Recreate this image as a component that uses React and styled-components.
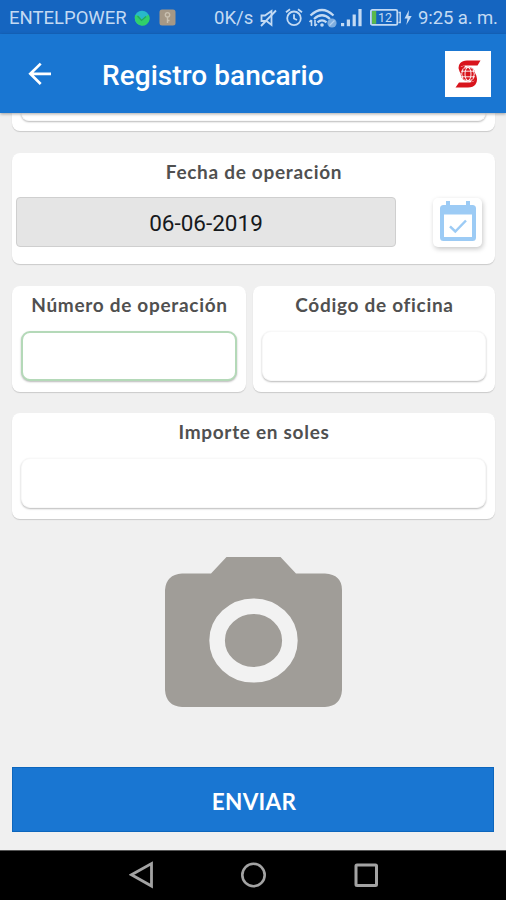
import React from 'react';
import styled, { createGlobalStyle } from 'styled-components';

const colors = {
  statusBar: '#1565c0',
  primary: '#1976d2',
  background: '#f0f0f0',
  white: '#ffffff',
  label: '#505050',
  statusText: '#c3daf3',
  disabled: '#e5e5e5',
  calendar: '#9ccbf5',
  camera: '#a09d98',
  nav: '#a3a3a3',
};

const GlobalStyle = createGlobalStyle`
  * {
    box-sizing: border-box;
  }

  body {
    margin: 0;
    background: ${colors.background};
  }

  svg {
    display: block;
    flex-shrink: 0;
  }
`;

const Screen = styled.div`
  display: flex;
  flex-direction: column;
  width: 506px;
  height: 900px;
  overflow: hidden;
  background: ${colors.background};
  font-family: Roboto, 'Liberation Sans', sans-serif;
`;

const StatusBar = styled.header`
  display: flex;
  align-items: center;
  height: 34px;
  padding: 1px 9px 0;
  flex-shrink: 0;
  background: ${colors.statusBar};
`;

const StatusText = styled.span`
  width: ${({width}) => width}px;
  margin-right: ${({gap}) => gap || 0}px;
  font-size: 18.5px;
  line-height: 34px;
  letter-spacing: ${({spacing}) => spacing || 0}px;
  white-space: nowrap;
  color: ${colors.statusText};
`;

const StatusIcon = styled.svg`
  margin-right: ${({$gap}) => $gap || 0}px;
`;

const Toolbar = styled.div`
  position: relative;
  z-index: 1;
  display: flex;
  align-items: center;
  height: 79px;
  padding: 0 15px 0 28px;
  flex-shrink: 0;
  background: ${colors.primary};
  box-shadow: 0 1px 3px rgba(0, 0, 0, 0.35);
`;

const BackButton = styled.button`
  width: 24px;
  height: 24px;
  padding: 0;
  border: 0;
  background: none;
`;

const Title = styled.h1`
  flex: 1;
  margin: 0 0 0 50px;
  padding-top: 3px;
  font-size: 28px;
  font-weight: 500;
  letter-spacing: 0.05px;
  color: ${colors.white};
`;

const BankLogo = styled.div`
  display: flex;
  align-items: center;
  justify-content: center;
  width: 46px;
  height: 46px;
  background: ${colors.white};
`;

const Content = styled.main`
  display: flex;
  flex: 1;
  flex-direction: column;
  min-height: 0;
  padding: 0 11px 0 12px;
`;

const Card = styled.section`
  display: flex;
  flex-direction: column;
  width: ${({width}) => (width ? `${width}px` : 'auto')};
  height: ${({height}) => height || 106}px;
  margin-bottom: ${({gap}) => gap || 0}px;
  padding: 0 ${({side}) => side || 9}px;
  flex-shrink: 0;
  background: ${colors.white};
  border-radius: 8px;
  box-shadow: 0 1px 1px rgba(0, 0, 0, 0.16);
`;

const ScrolledCard = styled(Card)`
  border-radius: 0 0 8px 8px;
`;

const CardRow = styled.div`
  display: flex;
  justify-content: space-between;
  margin-bottom: 21px;
`;

const Label = styled.label`
  display: block;
  height: ${({height}) => height || 45}px;
  padding: 7px 0 0 1px;
  font-family: Lato, sans-serif;
  font-size: 19px;
  font-weight: 700;
  line-height: 24px;
  letter-spacing: 0.7px;
  text-align: center;
  white-space: nowrap;
  color: ${colors.label};
`;

const Input = styled.input`
  width: 100%;
  height: 50px;
  padding: 0 12px;
  border: ${({$focused}) => ($focused ? '2px solid #b4d9b8' : '1px solid #f8f8f8')};
  border-radius: 9px;
  outline: none;
  background: ${colors.white};
  box-shadow: 0 1px 2px rgba(0, 0, 0, 0.28);
  font-size: 22px;
`;

const ScrolledInput = styled(Input)`
  height: 8px;
  border-top: 0;
  border-radius: 0 0 8px 8px;
`;

const DateRow = styled.div`
  display: flex;
  align-items: center;
  justify-content: space-between;
  padding-right: 9px;
`;

const DateField = styled.div`
  width: 380px;
  height: 50px;
  padding-top: 1px;
  border: 1px solid #cfcfcf;
  border-radius: 4px;
  background: ${colors.disabled};
  font-size: 22.5px;
  line-height: 49px;
  text-align: center;
  color: #16191c;
`;

const CalendarButton = styled.button`
  display: flex;
  justify-content: center;
  width: 49px;
  height: 49px;
  padding: 3px 0 0;
  border: 0;
  border-radius: 5px;
  background: ${colors.white};
  box-shadow: 1px 2px 5px rgba(0, 0, 0, 0.22);
`;

const CameraButton = styled.button`
  align-self: center;
  margin: 38px 0 60px;
  padding: 0;
  border: 0;
  background: none;
`;

const SubmitButton = styled.button`
  width: 482px;
  height: 65px;
  padding: 3px 0 0 2px;
  border: 1px solid #0d66bd;
  background: ${colors.primary};
  font-family: Lato, sans-serif;
  font-size: 22.5px;
  font-weight: 700;
  letter-spacing: 0.3px;
  color: ${colors.white};
`;

const NavBar = styled.footer`
  display: flex;
  align-items: center;
  gap: 87px;
  height: 50px;
  padding: 0 0 2px 129px;
  flex-shrink: 0;
  border-top: 1px solid #555;
  background: #000;
`;

const CarrierIcons = () => (
  <>
    <StatusIcon width="16" height="16" viewBox="0 0 16 16" $gap={9}>
      <circle cx="8" cy="8" r="7.3" fill="#28b9c9"/>
      <path d="M1 5L5 6L8 10L14.5 4.5A7.3 7.3 0 0 1 3 13.4Q0 10 1 5Z" fill="#31d06b"/>
      <path d="M3.5 6L7.5 10.5L12 6.5" fill="none" stroke="#23a860" strokeWidth="1.2"/>
    </StatusIcon>
    <StatusIcon width="17" height="17" viewBox="0 0 17 17" $gap={38}>
      <rect x="0.5" y="0.5" width="16" height="16" rx="2.5" fill="#a59886"/>
      <circle cx="8.5" cy="5.8" r="2.2" fill="none" stroke="#c9c0b0" strokeWidth="1.4"/>
      <path d="M8.5 8V14M8.5 11.5H10.5" fill="none" stroke="#c9c0b0" strokeWidth="1.4"/>
    </StatusIcon>
  </>
);

const SystemIcons = () => (
  <>
    <StatusIcon width="17" height="18" viewBox="0 0 17 18" $gap={8} fill="none" stroke={colors.statusText} strokeWidth="1.8">
      <path d="M1.5 6.5H5L11.5 2V16L6.5 12H1.5Z"/>
      <path d="M1 17L16 1.5"/>
    </StatusIcon>
    <StatusIcon width="18" height="19" viewBox="0 0 18 19" $gap={6} fill="none" stroke={colors.statusText} strokeWidth="1.8">
      <circle cx="9" cy="10.3" r="6.8"/>
      <path d="M9 6.3V10.5L12 12M1 4.2L5 1.2M17 4.2L13 1.2"/>
    </StatusIcon>
    <StatusIcon width="28" height="20" viewBox="0 0 28 20" $gap={4} fill="none" stroke={colors.statusText} strokeWidth="2.2">
      <path d="M1.5 7.5Q13 -3.5 24.5 7.5M5 11Q13 3.5 21 11M8.5 14.4Q13 10.5 17.5 14.4"/>
      <circle cx="13" cy="17" r="1.8" fill={colors.statusText} stroke="none"/>
      <path d="M2.5 12V18M0.5 14L2.5 12M6 12V18M6 18L8 16" strokeWidth="1.6"/>
      <circle cx="23" cy="15" r="4.6" fill="#7eaddf" stroke="none"/>
      <path d="M20.5 17.5L25.5 12.5" stroke="#b3d1f0" strokeWidth="1.2"/>
    </StatusIcon>
    <StatusIcon width="21" height="19" viewBox="0 0 21 19" $gap={8} fill={colors.statusText}>
      <rect x="0" y="15" width="3.2" height="3.2"/>
      <rect x="5.8" y="11.5" width="3.2" height="6.7"/>
      <rect x="11.6" y="6.5" width="3.2" height="11.7"/>
      <rect x="17.4" y="1" width="3.2" height="17.2"/>
    </StatusIcon>
    <StatusIcon width="31" height="17" viewBox="0 0 31 17" $gap={3}>
      <rect x="0.9" y="0.9" width="26.4" height="15" rx="1.5" fill="none" stroke={colors.statusText} strokeWidth="1.8"/>
      <rect x="2" y="2" width="4.2" height="12.8" fill="#5bb84d"/>
      <path d="M28.5 3.5H30.2V13.5H28.5" fill="none" stroke={colors.statusText} strokeWidth="1.4"/>
      <text x="15" y="13" fontSize="12.5" textAnchor="middle" fill={colors.statusText}>12</text>
    </StatusIcon>
    <StatusIcon width="8" height="17" viewBox="0 0 8 17" $gap={6}>
      <path d="M5 1L0.5 9.5H3.5L2.3 16L7.7 7H4.5Z" fill={colors.statusText}/>
    </StatusIcon>
  </>
);

const BackIcon = () => (
  <svg width="24" height="24" viewBox="0 0 24 24" fill="none" stroke="#fff" strokeWidth="2.7">
    <path d="M23 11.8H2.5M12.7 1.6L2.3 11.8L12.7 22"/>
  </svg>
);

const BankIcon = () => (
  <svg width="26" height="28" viewBox="0 0 26 28">
    <path d="M25.5 0.5H12C6 0.5 3 4 3.8 9.5C5 6.5 7.5 5.6 10 5.6H22.5Z" fill="#d8141c"/>
    <path d="M0.5 27.5H13C20 27.5 23 22.5 21.6 17.5C20.4 20.8 18 22.4 14.5 22.4H4Z" fill="#d8141c"/>
    <path d="M3.8 7.5C3.8 11 5 13 7 14.5L10 5.5ZM21.8 20C22 16 21 14 19 12.5L16 22Z" fill="#d8141c"/>
    <circle cx="13" cy="14" r="7.3" fill="#d8141c"/>
    <g fill="none" stroke="#fff" strokeWidth="0.9">
      <ellipse cx="13" cy="14" rx="3" ry="6.5"/>
      <path d="M6 11.2H20M6 16.8H20M8.5 8.3Q13 6.2 17.5 8.3M8.5 19.7Q13 21.8 17.5 19.7"/>
      <path d="M8 8.7Q5.4 14 8 19.3M18 8.7Q20.6 14 18 19.3"/>
    </g>
  </svg>
);

const CalendarIcon = () => (
  <svg width="36" height="41" viewBox="0 0 36 41">
    <path
      fillRule="evenodd"
      fill={colors.calendar}
      d="M6 0H10V4H26V0H30V4H32.5Q36 4 36 7.5V36.5Q36 40 32.5 40H3.5Q0 40 0 36.5V7.5Q0 4 3.5 4H6ZM4 13.5V36H32V13.5Z"
    />
    <path d="M10 25.3L15.3 30.5L26 19.5" fill="none" stroke={colors.calendar} strokeWidth="2.5"/>
  </svg>
);

const CameraIcon = () => (
  <svg width="177" height="150" viewBox="0 0 177 150">
    <path
      fill={colors.camera}
      d="M46 16.5L61.5 0H115.5L131 16.5H160Q177 17.5 177 33V133Q176 149 160 150H17Q1 149 0 133V33Q1 17.5 17 16.5Z"
    />
    <ellipse cx="88.5" cy="83.5" rx="36.4" ry="34.3" fill="none" stroke="#f2f2f2" strokeWidth="15.6"/>
  </svg>
);

const NavIcons = () => (
  <>
    <svg width="25" height="28" viewBox="0 0 25 28" fill="none" stroke={colors.nav} strokeWidth="2.8">
      <path d="M22.5 2.6V25L2.5 13.8Z"/>
    </svg>
    <svg width="26" height="26" viewBox="0 0 26 26" fill="none" stroke={colors.nav} strokeWidth="2.6">
      <circle cx="12.5" cy="13" r="11.2"/>
    </svg>
    <svg width="24" height="24" viewBox="0 0 24 24" fill="none" stroke={colors.nav} strokeWidth="3">
      <rect x="2" y="2" width="20.5" height="20.5" rx="1"/>
    </svg>
  </>
);

function App() {
  return (
    <Screen>
      <GlobalStyle/>
      <StatusBar>
        <StatusText width={117} gap={8}>ENTELPOWER</StatusText>
        <CarrierIcons/>
        <StatusText width={40} gap={6}>0K/s</StatusText>
        <SystemIcons/>
        <StatusText width={79} spacing={-0.1}>9:25 a. m.</StatusText>
      </StatusBar>
      <Toolbar>
        <BackButton aria-label="Volver"><BackIcon/></BackButton>
        <Title>Registro bancario</Title>
        <BankLogo><BankIcon/></BankLogo>
      </Toolbar>
      <Content>
        <ScrolledCard height={18} gap={22}>
          <ScrolledInput aria-label="Cuenta"/>
        </ScrolledCard>
        <Card height={111} gap={22} side={4}>
          <Label height={44}>Fecha de operación</Label>
          <DateRow>
            <DateField>06-06-2019</DateField>
            <CalendarButton aria-label="Elegir fecha"><CalendarIcon/></CalendarButton>
          </DateRow>
        </Card>
        <CardRow>
          <Card width={234}>
            <Label htmlFor="operation">Número de operación</Label>
            <Input id="operation" $focused/>
          </Card>
          <Card width={242}>
            <Label htmlFor="office">Código de oficina</Label>
            <Input id="office"/>
          </Card>
        </CardRow>
        <Card>
          <Label htmlFor="amount">Importe en soles</Label>
          <Input id="amount"/>
        </Card>
        <CameraButton aria-label="Tomar foto"><CameraIcon/></CameraButton>
        <SubmitButton>ENVIAR</SubmitButton>
      </Content>
      <NavBar>
        <NavIcons/>
      </NavBar>
    </Screen>
  );
}

export default App;
